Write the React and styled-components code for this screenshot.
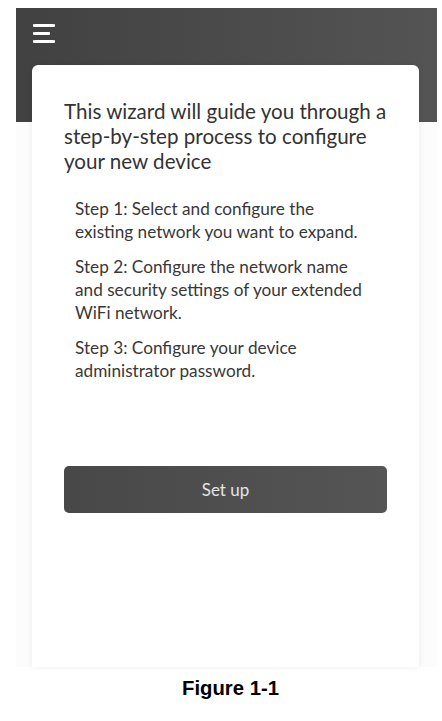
import React from 'react';
import styled, { createGlobalStyle } from 'styled-components';

const GlobalStyle = createGlobalStyle`
  html, body { margin: 0; padding: 0; background: #ffffff; }
  body { font-family: Lato, "Noto Sans", sans-serif; }
`;

const Page = styled.div`
  width: 442px;
  padding: 8px 5px 0 16px;
  box-sizing: border-box;
`;

const Screen = styled.div`
  width: 421px;
  background:
    linear-gradient(90deg, #414141, #545454) top left / 100% 114px no-repeat,
    #fcfcfc;
`;

const TopBar = styled.div`
  height: 57px;
  display: flex;
  align-items: flex-start;
  padding: 16px 0 0 17px;
  box-sizing: border-box;
`;

const Card = styled.div`
  margin: 0 18px 0 16px;
  height: 602px;
  background: #ffffff;
  border-radius: 6px 6px 0 0;
  box-shadow: 0 0 6px rgba(0, 0, 0, 0.08);
  padding: 34px 32px 0 32px;
  box-sizing: border-box;
  display: flex;
  flex-direction: column;
`;

const Intro = styled.p`
  margin: 0;
  font-size: 20.6px;
  line-height: 25px;
  color: #333333;
`;

const Steps = styled.div`
  margin-top: 23px;
  padding-left: 11px;
  display: flex;
  flex-direction: column;
  gap: 12px;
`;

const Step = styled.p`
  margin: 0;
  font-size: 17.2px;
  line-height: 23px;
  color: #383838;
  white-space: nowrap;
`;

const SetupButton = styled.button`
  margin-top: 84px;
  height: 47px;
  width: 100%;
  border: none;
  border-radius: 5px;
  background: linear-gradient(90deg, #484848, #555555);
  color: #e4e4e4;
  font-family: Lato, "Noto Sans", sans-serif;
  font-size: 17px;
  cursor: pointer;
`;

const Caption = styled.div`
  width: 421px;
  box-sizing: border-box;
  padding-left: 8px;
  text-align: center;
  margin-top: 10px;
  font-family: "Liberation Sans", Arial, sans-serif;
  font-weight: bold;
  font-size: 20.3px;
  color: #000000;
`;

function MenuIcon() {
  return (
    <svg width="24" height="20" viewBox="0 0 24 20">
      <rect x="0" y="0" width="22" height="3" rx="1" fill="#ffffff" />
      <rect x="0" y="8" width="17" height="3" rx="1" fill="#ffffff" />
      <rect x="0" y="16" width="22" height="3" rx="1" fill="#ffffff" />
    </svg>
  );
}

export default function App() {
  return (
    <>
      <GlobalStyle />
      <Page>
        <Screen>
          <TopBar>
            <MenuIcon />
          </TopBar>
          <Card>
            <Intro>
              This wizard will guide you through a step-by-step process to configure your new device
            </Intro>
            <Steps>
              <Step>Step 1: Select and configure the<br />existing network you want to expand.</Step>
              <Step>Step 2: Configure the network name<br />and security settings of your extended<br />WiFi network.</Step>
              <Step>Step 3: Configure your device<br />administrator password.</Step>
            </Steps>
            <SetupButton>Set up</SetupButton>
          </Card>
        </Screen>
        <Caption>Figure 1-1</Caption>
      </Page>
    </>
  );
}
